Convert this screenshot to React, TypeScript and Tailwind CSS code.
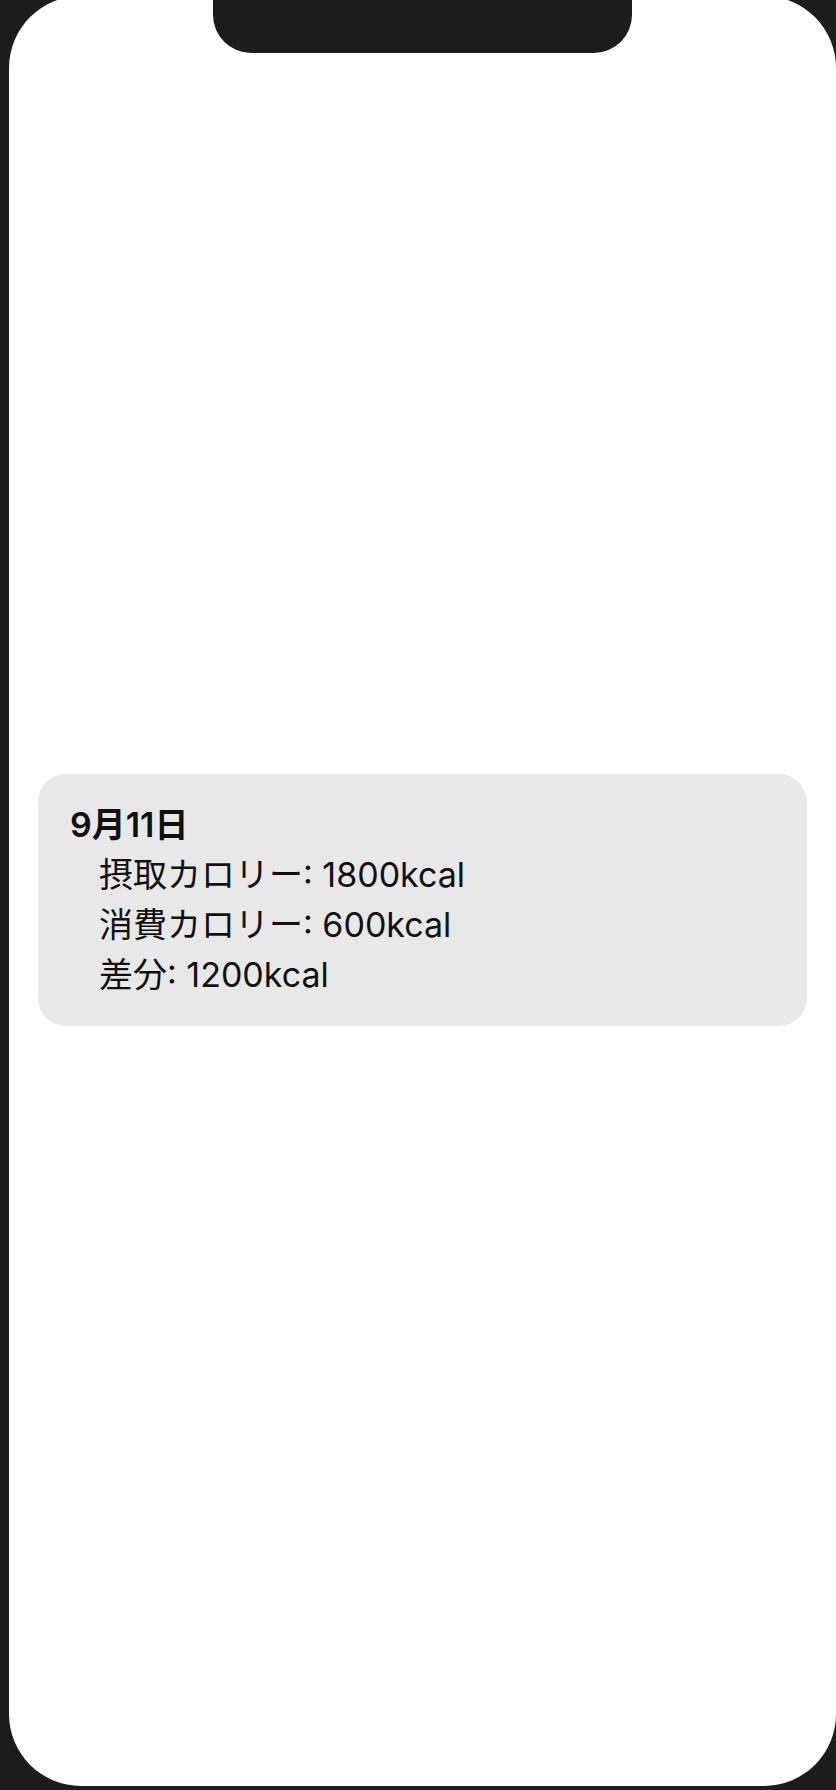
const entries = [
  { label: '摂取カロリー', value: '1800kcal' },
  { label: '消費カロリー', value: '600kcal' },
  { label: '差分', value: '1200kcal' },
];

export default function App() {
  return (
    <div className="h-[1790px] w-[836px] overflow-hidden bg-[#1c1c1c] pl-[9px]">
      {/* device screen */}
      <div className="relative -mt-[4px] flex h-[1790px] w-[827px] flex-col justify-center rounded-[72px] bg-white pt-[18px]">
        {/* notch */}
        <div className="absolute left-[204px] top-0 h-[57px] w-[419px] rounded-b-[38px] bg-[#1c1c1c]" />

        <div
          className="mx-[29px] rounded-[28px] bg-[#e8e8e8] px-[32px] py-[26px] text-[34px] leading-[50px] text-[#111]"
          style={{ fontFamily: 'Inter, "Noto Sans CJK JP", sans-serif' }}
        >
          <div className="font-semibold">9月11日</div>
          {entries.map((e) => (
            <div key={e.label} className="pl-[29px]">
              {e.label}: {e.value}
            </div>
          ))}
        </div>
      </div>
    </div>
  );
}
